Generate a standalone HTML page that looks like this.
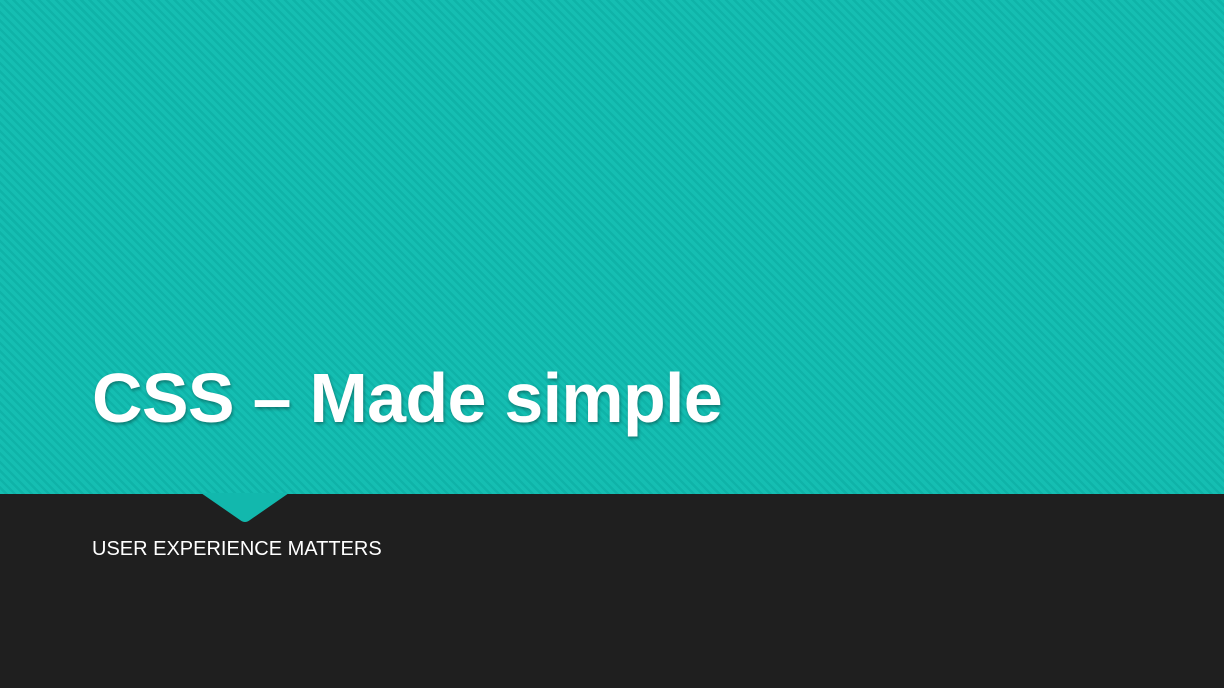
<!DOCTYPE html>
<html><head><style>
html,body{margin:0;padding:0;}
body{width:1224px;height:688px;position:relative;overflow:hidden;background:#1f1f1f;font-family:"Liberation Sans",sans-serif;}
.top{position:absolute;left:0;top:0;width:1224px;height:494px;background:repeating-linear-gradient(45deg,#15beb2 0px,#15beb2 3.5px,#0fb3a8 3.5px,#0fb3a8 6px);}
.notch{position:absolute;left:0;top:0;}
h1{position:absolute;left:92px;top:358px;margin:0;font-size:70px;font-weight:bold;color:#fff;letter-spacing:-0.7px;text-shadow:1px 2px 3px rgba(0,0,0,0.35);white-space:nowrap;}
.sub{position:absolute;left:92px;top:538px;font-size:20px;color:#fff;white-space:nowrap;letter-spacing:0px;}
</style></head><body>
<div class="top"></div>
<svg class="notch" width="1224" height="688">
<path d="M201 493 L240 520 Q245 524 250 520 L289 493 Z" fill="#12b8ad"/>
</svg>
<h1>CSS – Made simple</h1>
<div class="sub">USER EXPERIENCE MATTERS</div>
</body></html>
